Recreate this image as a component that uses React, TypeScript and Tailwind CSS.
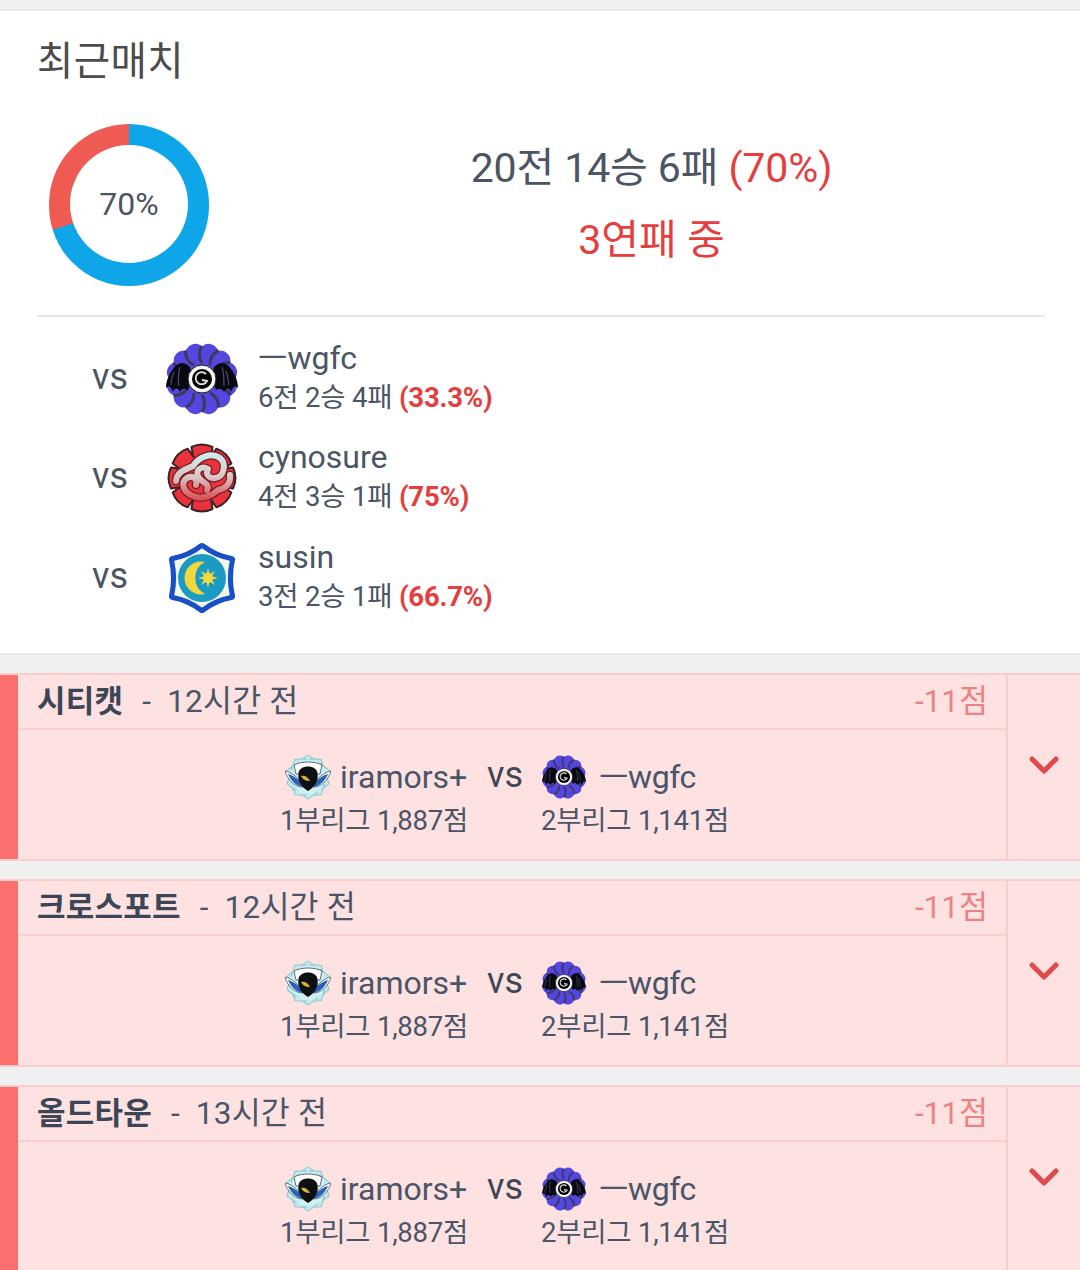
import React from "react";

const FONT = { fontFamily: 'Roboto, "Noto Sans CJK KR", sans-serif' };

function WgfcEmblem({ size }: { size: number }) {
  const petals = Array.from({ length: 12 }, (_, i) => i * 30);
  return (
    <svg width={size} height={size} viewBox="0 0 72 72" className="shrink-0">
      <circle cx="36" cy="36" r="28" fill="#5546e0" />
      {petals.map((a) => (
        <circle key={a} cx="36" cy="10" r="10" fill="#5546e0" transform={`rotate(${a + 15} 36 36)`} />
      ))}
      {petals.map((a) => (
        <path key={a} transform={`rotate(${a} 36 36)`} d="M36 20 C32 14 33 8 36 3" fill="none" stroke="#3a3a5c" strokeWidth="3" />
      ))}
      <path d="M24 24 C17 17 11 20 7 26 C3 31 0 38 0 45 C3 41 5 44 7 49 C9 44 12 45 14 49 C16 45 19 45 22 47 C24 40 27 34 24 24Z" fill="#08080f" />
      <path d="M48 24 C55 17 61 20 65 26 C69 31 72 38 72 45 C69 41 67 44 65 49 C63 44 60 45 58 49 C56 45 53 45 50 47 C48 40 45 34 48 24Z" fill="#08080f" />
      <path d="M8 29 C6 34 5 38 5 42 M14 24 C12 30 12 36 13 43 M60 28 C62 34 62 38 63 42 M56 24 C58 30 58 36 58 43" fill="none" stroke="#4a4a78" strokeWidth="1.2" />
      <circle cx="36" cy="36" r="14" fill="#f6f6f6" stroke="#1a1a1a" strokeWidth="1" />
      <circle cx="36" cy="36" r="10" fill="#030303" />
      <path d="M40 31 A6 6 0 1 0 41 38 L36 37" fill="none" stroke="#e6e6e6" strokeWidth="1.8" />
    </svg>
  );
}

function CynosureEmblem({ size }: { size: number }) {
  const petals = Array.from({ length: 8 }, (_, i) => i * 45);
  const knot = "M10 39 C11 29 21 27 27 24 C33 15 45 10 54 16 C61 22 58 35 49 36 C43 37 39 32 42 27 M64 33 C65 42 59 47 52 48 C46 54 35 58 27 54 C16 50 15 40 21 36 C27 33 32 37 30 43 M42 27 C35 23 28 29 33 36 C37 41 44 42 41 48";
  return (
    <svg width={size} height={size} viewBox="0 0 72 72" className="shrink-0">
      <defs>
        <linearGradient id="cyn" gradientUnits="userSpaceOnUse" x1="36" y1="12" x2="36" y2="58">
          <stop offset="0" stopColor="#cdeeee" />
          <stop offset="0.5" stopColor="#dcc4c4" />
          <stop offset="1" stopColor="#dc4a50" />
        </linearGradient>
      </defs>
      {petals.map((a) => (
        <g key={a} transform={`rotate(${a} 36 36)`}>
          <path d="M28 22 L25.5 5 Q36 0 46.5 5 L44 22Z" fill="#e8323c" stroke="#3a2226" strokeWidth="2" strokeLinejoin="round" />
        </g>
      ))}
      <circle cx="36" cy="36" r="22" fill="#e8323c" />
      <path d={knot} fill="none" stroke="#7a1c24" strokeWidth="8.5" strokeLinecap="round" />
      <path d={knot} fill="none" stroke="url(#cyn)" strokeWidth="6" strokeLinecap="round" />
    </svg>
  );
}

function SusinEmblem({ size }: { size: number }) {
  const rays = Array.from({ length: 8 }, (_, i) => i * 45);
  const outer = "M36 5 Q49 15 65 18 Q61 36 65 54 Q49 57 36 67 Q23 57 7 54 Q11 36 7 18 Q23 15 36 5Z";
  return (
    <svg width={size} height={size} viewBox="0 0 72 72" className="shrink-0">
      <path d={outer} fill="#1750c8" stroke="#1750c8" strokeWidth="8" strokeLinejoin="round" />
      <path d={outer} fill="#f4f8e6" stroke="#f4f8e6" strokeWidth="1" strokeLinejoin="round" transform="translate(36 36) scale(.94) translate(-36 -36)" />
      <circle cx="36" cy="36" r="24" fill="#1b9bc4" />
      <path d="M39 20 A16.5 16.5 0 1 0 39 52 A18 18 0 0 1 39 20Z" fill="#f0d83c" />
      {rays.map((a) => (
        <path key={a} transform={`rotate(${a} 42 36)`} d="M39.5 36 L42 26 L44.5 36Z" fill="#f4da3c" />
      ))}
      <circle cx="42" cy="36" r="5" fill="#f4da3c" />
    </svg>
  );
}

function IramorsEmblem({ size }: { size: number }) {
  const petals = Array.from({ length: 10 }, (_, i) => i * 36);
  return (
    <svg width={size} height={size} viewBox="0 0 46 46" className="shrink-0">
      {petals.map((a) => (
        <path key={a} transform={`rotate(${a} 23 23)`} d="M14 7 L23 1 L32 7 L23 23Z" fill="#c4eaee" stroke="#85c8cc" strokeWidth="1" />
      ))}
      <circle cx="23" cy="23" r="17" fill="#d0f0f2" />
      <path d="M9 11 C16 7 30 7 37 11 L35 20 L11 20Z" fill="#fff" stroke="#3a4a55" strokeWidth=".8" />
      <path d="M0 17 C7 18 14 24 18 33 C10 33 3 27 0 17Z" fill="#f4fbfb" stroke="#30465a" strokeWidth=".7" />
      <path d="M46 17 C39 18 32 24 28 33 C36 33 43 27 46 17Z" fill="#f4fbfb" stroke="#30465a" strokeWidth=".7" />
      <path d="M3 20 C10 22 15 26 18 33 C11 32 6 27 3 20Z" fill="#2a62b8" />
      <path d="M43 20 C36 22 31 26 28 33 C35 32 40 27 43 20Z" fill="#2a62b8" />
      <path d="M13.5 20 C13 10 33 10 32.5 20 C34 28 28 34 23 37 C18 34 12 28 13.5 20Z" fill="#0e1014" />
      <path d="M16 22 C20 21 23 23 25 27 C21 27 18 26 16 22Z" fill="#d2b03a" />
    </svg>
  );
}

function Opponent({ emblem, name, record, pct }: { emblem: React.ReactNode; name: string; record: string; pct: string }) {
  return (
    <div className="flex items-center h-[99.5px]">
      <div className="w-[129px] pl-[55px] text-[36px] text-[#4b5563] leading-none -translate-y-[2px]">vs</div>
      {emblem}
      <div className="ml-[20px] -mt-[1px]">
        <div className="text-[32px] leading-[39px] text-[#4b5563]">{name}</div>
        <div className="text-[27.5px] leading-[40px] text-[#4b5563] tracking-[-0.2px]">
          {record} <span className="font-bold text-[#e53e3e]">{pct}</span>
        </div>
      </div>
    </div>
  );
}

function Match({ map, time, className }: { map: string; time: string; className?: string }) {
  return (
    <div className={`flex bg-[#fee2e2] border-t-2 border-b-2 border-[#fbcdcd] ${className ?? ""}`}>
      <div className="w-[18px] shrink-0 bg-[#fc6f6f]" />
      <div className="flex-1 min-w-0 border-r-2 border-[#fbcdcd]">
        <div className="h-[55px] flex items-center justify-between pl-[19px] pr-[18px] border-b-2 border-[#fbcdcd]">
          <div className="text-[31.5px] text-[#4a5568] tracking-[0.2px] whitespace-pre">
            <span className="font-bold text-[31px] text-[#3d4656] mr-[3px]">{map}</span>{"  -  "}{time}
          </div>
          <div className="text-[31.5px] text-[#ea8484]">-11점</div>
        </div>
        <div className="h-[129px] flex flex-col items-center text-[#4a5568]">
          <div className="flex items-center h-[46px] mt-[24px] w-[450px] -translate-x-[7px] pl-[5px]">
            <IramorsEmblem size={46} />
            <span className="ml-[9px] w-[147px] text-[32px] leading-none">iramors+</span>
            <span className="w-[55px] text-[36px] leading-none text-[#3f4756] -translate-y-[2px]">vs</span>
            <WgfcEmblem size={44} />
            <span className="ml-[13px] text-[32px] leading-none tracking-[-0.4px]">ㅡwgfc</span>
          </div>
          <div className="flex w-[450px] -translate-x-[7px] text-[27.5px] leading-[40px] mt-[1px] tracking-[-0.25px]">
            <span className="w-[261px]">1부리그 1,887점</span>
            <span>2부리그 1,141점</span>
          </div>
        </div>
      </div>
      <div className="w-[72px] shrink-0 flex justify-center pt-[80px]">
        <svg width="30" height="20" viewBox="0 0 30 20" className="-ml-[1px]">
          <path d="M3 4 L15 16 L27 4" fill="none" stroke="#e04a4a" strokeWidth="5" strokeLinecap="round" strokeLinejoin="round" />
        </svg>
      </div>
    </div>
  );
}

export default function App() {
  return (
    <div className="w-[1080px] h-[1270px] overflow-hidden bg-[#f0f0f0]" style={FONT}>
      <div className="mt-[9px] h-[646px] bg-white border-t-2 border-b-2 border-[#ececec] pl-[37px] pr-[35px]">
        <h2 className="text-[39.5px] leading-[50px] mt-[26px] text-[#4b4b4b] tracking-[0.4px]">최근매치</h2>
        <div className="flex items-center h-[230px] pt-[8px] border-b-2 border-[#e8e8e8]">
          <div className="w-[184px] pl-[12px] shrink-0">
            <div className="w-[160px] h-[162px] rounded-full bg-[conic-gradient(#0ea5e9_0_70%,#ef5b52_70%_100%)] flex items-center justify-center">
              <div className="w-[118px] h-[118px] rounded-full bg-white flex items-center justify-center text-[32px] text-[#4b5563] -translate-y-[1px]">70%</div>
            </div>
          </div>
          <div className="flex-1 flex flex-col items-center pl-[37px] -mt-[2px]">
            <div className="text-[41px] leading-[72px] tracking-[-0.1px] text-[#4b5563]">
              20전 14승 6패 <span className="text-[#e53e3e]">(70%)</span>
            </div>
            <div className="text-[41px] leading-[72px] text-[#e53e3e]">3연패 중</div>
          </div>
        </div>
        <div className="mt-[12px]">
          <Opponent emblem={<WgfcEmblem size={72} />} name="ㅡwgfc" record="6전 2승 4패" pct="(33.3%)" />
          <Opponent emblem={<CynosureEmblem size={72} />} name="cynosure" record="4전 3승 1패" pct="(75%)" />
          <Opponent emblem={<SusinEmblem size={72} />} name="susin" record="3전 2승 1패" pct="(66.7%)" />
        </div>
      </div>
      <div className="mt-[18px]">
        <Match map="시티캣" time="12시간 전" />
        <Match map="크로스포트" time="12시간 전" className="mt-[18px]" />
        <Match map="올드타운" time="13시간 전" className="mt-[18px]" />
      </div>
    </div>
  );
}
